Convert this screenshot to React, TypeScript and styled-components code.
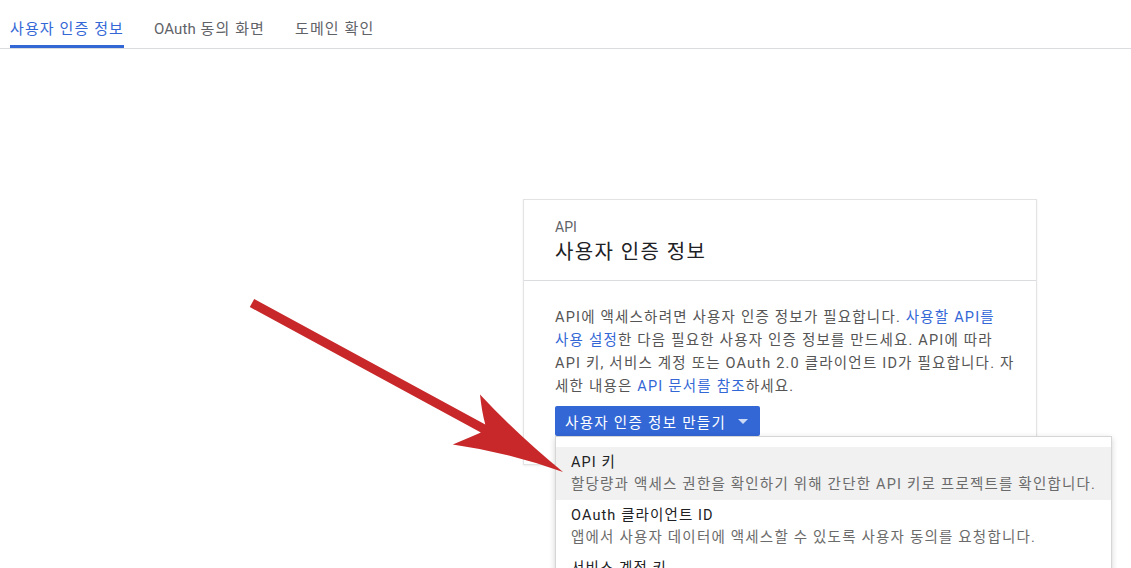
import React from "react";
import styled, { createGlobalStyle } from "styled-components";

const GlobalStyle = createGlobalStyle`
  html, body {
    margin: 0;
    padding: 0;
    background: #fff;
    overflow: hidden;
  }
  body {
    font-family: "Roboto", "Noto Sans CJK KR", sans-serif;
    -webkit-font-smoothing: antialiased;
  }
`;

const Page = styled.div`
  position: relative;
  width: 1131px;
  height: 568px;
  overflow: hidden;
`;

const TabBar = styled.nav`
  display: flex;
  gap: 30px;
  height: 48px;
  padding-left: 10px;
  border-bottom: 1px solid #dadce0;
`;

const Tab = styled.div<{ active?: boolean }>`
  display: block;
  box-sizing: border-box;
  height: 48px;
  padding-top: 14px;
  line-height: 30px;
  font-size: 15px;
  letter-spacing: 1.1px;
  white-space: nowrap;
  color: ${(p) => (p.active ? "#3367d6" : "#5f6368")};
  border-bottom: 3px solid ${(p) => (p.active ? "#3367d6" : "transparent")};
`;

// Latin words sit tighter than the Hangul around them
const Latin = styled.span`
  letter-spacing: 0.1px;
`;

const Main = styled.main`
  padding: 150px 0 0 523px;
`;

const Card = styled.section`
  position: relative;
  width: 514px;
  box-sizing: border-box;
  border: 1px solid #e3e3e3;
  box-shadow: 0 1px 2px rgba(0, 0, 0, 0.08);
  background: #fff;
`;

const CardHeader = styled.header`
  padding: 17px 31px 14px;
  border-bottom: 1px solid #dadce0;
`;

const Eyebrow = styled.div`
  font-size: 14px;
  line-height: 20px;
  color: #5f6368;
`;

const Title = styled.h1`
  margin: 1px 0 0;
  font-size: 20px;
  font-weight: 400;
  line-height: 28px;
  letter-spacing: 1.4px;
  color: #202124;
`;

const CardBody = styled.div`
  padding: 25px 31px 28px;
`;

const Paragraph = styled.p`
  margin: 0 0 8px;
  font-size: 14.5px;
  line-height: 23px;
  letter-spacing: 1.2px;
  color: #555;
  white-space: nowrap;
`;

const Link = styled.a`
  color: #3367d6;
  text-decoration: none;
`;

const MenuAnchor = styled.div`
  position: relative;
  display: inline-block;
`;

const CreateButton = styled.button`
  display: flex;
  align-items: center;
  gap: 12px;
  height: 30px;
  padding: 0 12px 0 10px;
  border: none;
  border-radius: 2px;
  background: #3367d6;
  color: #fff;
  font-family: inherit;
  font-size: 14.5px;
  letter-spacing: 1.3px;
  cursor: pointer;
`;

const Caret = styled.span`
  width: 0;
  height: 0;
  border-left: 5px solid transparent;
  border-right: 5px solid transparent;
  border-top: 5px solid rgba(255, 255, 255, 0.75);
  margin-top: 1px;
`;

const Menu = styled.ul`
  position: absolute;
  top: 30px;
  left: 0;
  width: 557px;
  margin: 0;
  padding: 10px 0 0;
  list-style: none;
  box-sizing: border-box;
  background: #fff;
  border: 1px solid #d6d6d6;
  box-shadow: 0 2px 6px rgba(0, 0, 0, 0.18);
  z-index: 2;
`;

const MenuItem = styled.li<{ highlighted?: boolean }>`
  padding: 5px 15px 4px;
  background: ${(p) => (p.highlighted ? "#f1f1f1" : "transparent")};
`;

const ItemTitle = styled.div`
  font-size: 14.5px;
  line-height: 22px;
  letter-spacing: 1.1px;
  color: #202124;
`;

const ItemDesc = styled.div`
  font-size: 14.5px;
  line-height: 22px;
  letter-spacing: 1.2px;
  color: #6b6b6b;
  white-space: nowrap;
`;

const ArrowLayer = styled.svg`
  position: absolute;
  left: 0;
  top: 0;
  pointer-events: none;
  z-index: 5;
`;

const menuItems = [
  {
    title: "API 키",
    desc: "할당량과 액세스 권한을 확인하기 위해 간단한 API 키로 프로젝트를 확인합니다.",
  },
  {
    title: "OAuth 클라이언트 ID",
    desc: "앱에서 사용자 데이터에 액세스할 수 있도록 사용자 동의를 요청합니다.",
  },
  {
    title: "서비스 계정 키",
    desc: "로봇 계정을 사용하여 서버 간, 앱 수준 인증을 사용 설정합니다.",
  },
];

const PointerArrow = () => (
  <ArrowLayer width="1131" height="568" viewBox="0 0 1131 568">
    <g transform="translate(252 303) rotate(28.52)">
      <path
        d="M 0 -4.6 L 263 -4.6 Q 254 -14 244 -28.5 Q 296 -11 354 0 Q 296 9 244 28.5 Q 255 15 263 4.6 L 0 4.6 Z"
        fill="#c8282a"
      />
    </g>
  </ArrowLayer>
);

export default function App() {
  return (
    <Page>
      <GlobalStyle />
      <TabBar>
        <Tab active>사용자 인증 정보</Tab>
        <Tab>
          <Latin>OAuth</Latin> 동의 화면
        </Tab>
        <Tab>도메인 확인</Tab>
      </TabBar>
      <Main>
        <Card>
          <CardHeader>
            <Eyebrow>API</Eyebrow>
            <Title>사용자 인증 정보</Title>
          </CardHeader>
          <CardBody>
            <Paragraph>
              API에 액세스하려면 사용자 인증 정보가 필요합니다. <Link href="#">사용할 API를</Link>
              <br />
              <Link href="#">사용 설정</Link>한 다음 필요한 사용자 인증 정보를 만드세요. API에 따라
              <br />
              API 키, 서비스 계정 또는 OAuth 2.0 클라이언트 ID가 필요합니다. 자
              <br />
              세한 내용은 <Link href="#">API 문서를 참조</Link>하세요.
            </Paragraph>
            <MenuAnchor>
              <CreateButton>
                사용자 인증 정보 만들기
                <Caret />
              </CreateButton>
              <Menu>
                {menuItems.map((item, i) => (
                  <MenuItem key={item.title} highlighted={i === 0}>
                    <ItemTitle>{item.title}</ItemTitle>
                    <ItemDesc>{item.desc}</ItemDesc>
                  </MenuItem>
                ))}
              </Menu>
            </MenuAnchor>
          </CardBody>
        </Card>
      </Main>
      <PointerArrow />
    </Page>
  );
}
